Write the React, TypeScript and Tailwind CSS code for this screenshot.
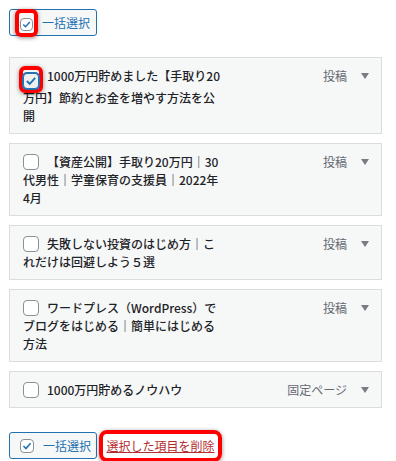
import React from "react";

type Post = { title: React.ReactNode; type: string; checked?: boolean; marked?: boolean };

const posts: Post[] = [
  { title: "1000万円貯めました【手取り20万円】節約とお金を増やす方法を公開", type: "投稿", checked: true, marked: true },
  { title: "【資産公開】手取り20万円｜30代男性｜学童保育の支援員｜2022年4月", type: "投稿" },
  { title: "失敗しない投資のはじめ方｜これだけは回避しよう５選", type: "投稿" },
  { title: "ワードプレス（WordPress）でブログをはじめる｜簡単にはじめる方法", type: "投稿" },
  { title: "1000万円貯めるノウハウ", type: "固定ページ" },
];

function Check({ checked, size = 16, focus = false }: { checked?: boolean; size?: number; focus?: boolean }) {
  return (
    <span
      className={`inline-flex items-center justify-center rounded-[4px] border align-middle ${
        focus ? "border-[#2271b1] bg-[#f0f0f1] shadow-[0_0_0_1px_#2271b1]" : "border-[#8c8f94] bg-white"
      }`}
      style={{ width: size, height: size }}
    >
      {checked && (
        <svg viewBox="0 0 16 16" width={size - 2} height={size - 2}>
          <path d="M3.3 8 L6.6 11.3 L12.8 4.4" fill="none" stroke="#2271b1" strokeWidth="2.2" />
        </svg>
      )}
    </span>
  );
}

function Marked({ children, inset }: { children: React.ReactNode; inset: string }) {
  return (
    <span className="relative inline-flex align-middle">
      <span className={`absolute ${inset} rounded-[6px] border-[4px] border-[#ff0000] shadow-[0_1px_4px_rgba(0,0,0,0.45)]`} />
      <span className="relative">{children}</span>
    </span>
  );
}

function SelectAll({ marked }: { marked?: boolean }) {
  return (
    <button className="flex h-[27px] w-[88px] items-center gap-[9px] rounded-[3px] border border-[#2271b1] bg-[#f6f7f7] pl-[10px] text-[12px] text-[#2271b1]">
      {marked ? (
        <Marked inset="-inset-[5px]">
          <Check checked size={13} />
        </Marked>
      ) : (
        <Check checked size={14} />
      )}
      <span>一括選択</span>
    </button>
  );
}

export default function App() {
  return (
    <div className="min-h-[461px] bg-white pl-[9px] pt-[9px] font-['Noto_Sans_CJK_JP','Noto_Sans',sans-serif]">
      <SelectAll marked />

      <div className="mt-[21px] flex w-[373px] flex-col gap-[9px]">
        {posts.map((p, i) => (
          <div key={i} className="flex border border-[#dcdcde] bg-[#f6f7f7] pb-[8px] pl-[13px] pr-[12px] pt-[9px]">
            <div className="w-[198px] text-[12px] font-medium leading-[18px] text-[#1d2327]">
              <span className="mr-[8px] inline-flex align-[-3px]">
                {p.marked ? (
                  <Marked inset="-inset-[4px]">
                    <Check checked focus />
                  </Marked>
                ) : (
                  <Check checked={p.checked} />
                )}
              </span>
              {p.title}
            </div>
            <div className="flex flex-1 items-start justify-end gap-[14px] text-[12px] leading-[18px] text-[#646970]">
              <span>{p.type}</span>
              <svg viewBox="0 0 8 6" width="8" height="6" className="mt-[6px]">
                <path d="M0 0 H8 L4 6 Z" fill="#787c82" />
              </svg>
            </div>
          </div>
        ))}
      </div>

      <div className="mt-[22px] flex items-center gap-[2px]">
        <SelectAll />
        <span className="relative inline-flex h-[32px] w-[123px] items-center justify-center">
          <span className="absolute inset-0 rounded-[8px] border-[4px] border-[#ff0000] shadow-[0_1px_4px_rgba(0,0,0,0.45)]" />
          <a className="relative text-[12px] text-[#b32d2e] underline">選択した項目を削除</a>
        </span>
      </div>
    </div>
  );
}
